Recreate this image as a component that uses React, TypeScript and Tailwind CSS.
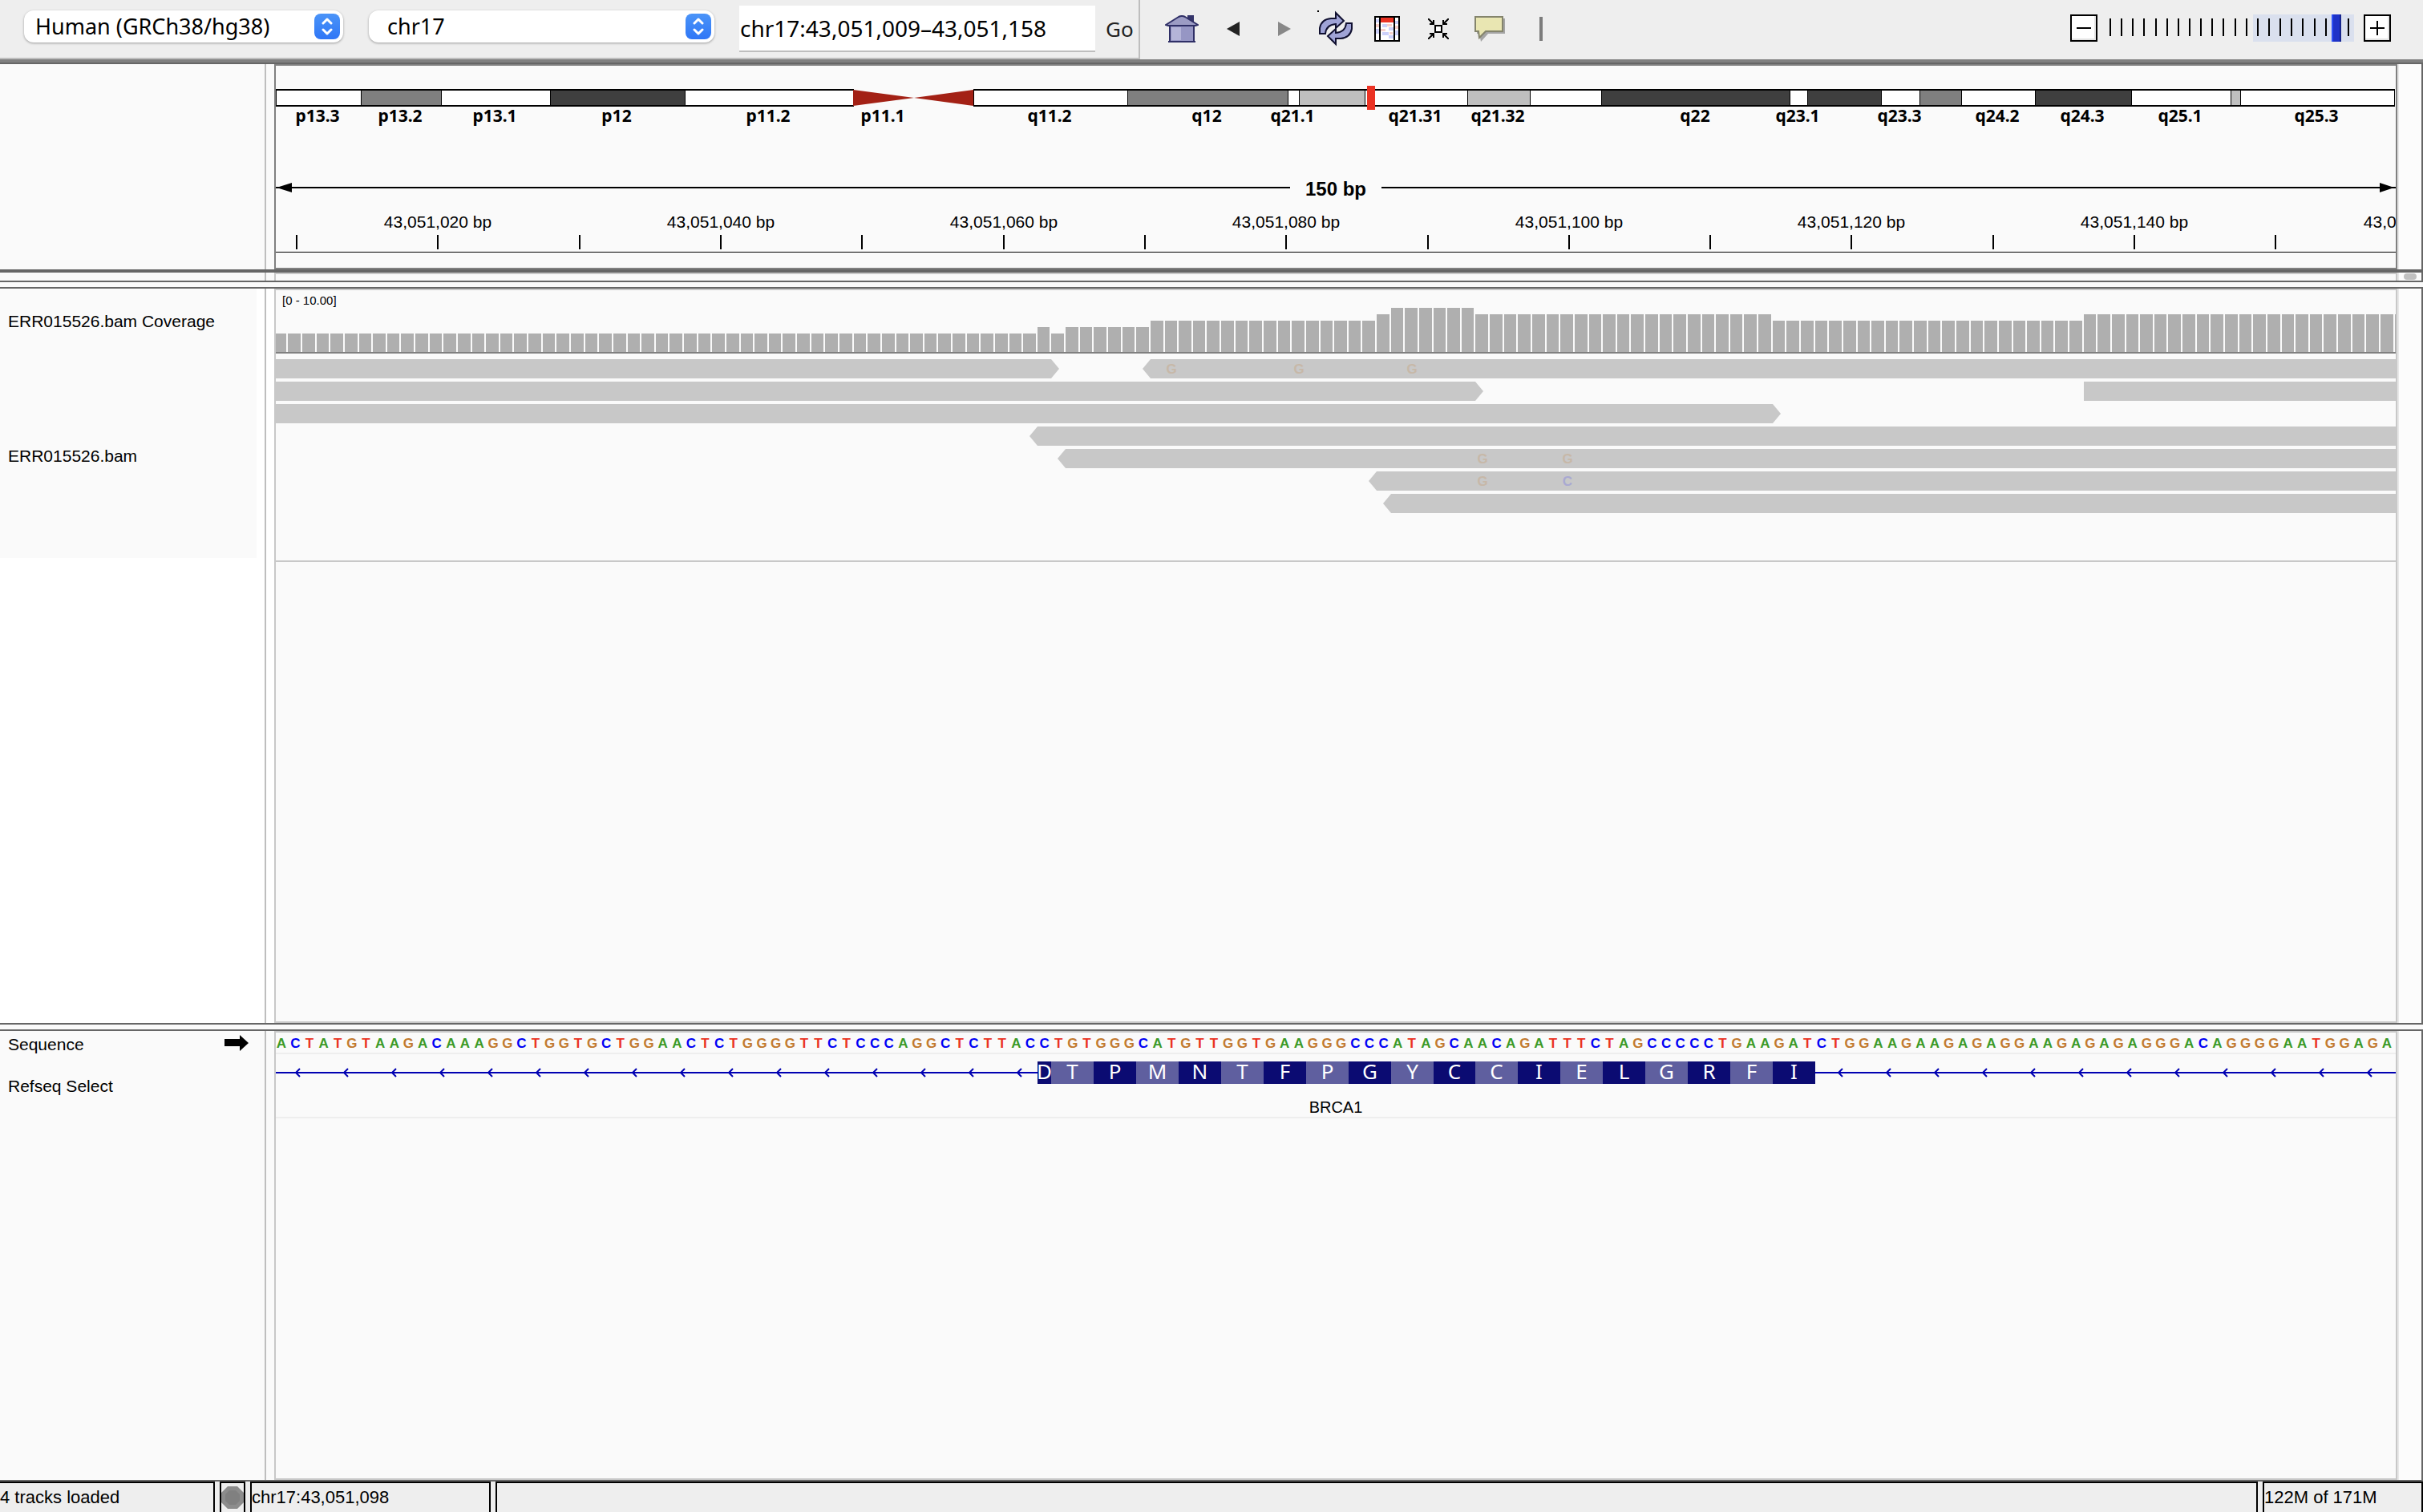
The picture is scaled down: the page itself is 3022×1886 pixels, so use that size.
import { useLayoutEffect, useRef, useState } from "react"
import type { ReactNode } from "react"

const SEQUENCE =
  "ACTATGTAAGACAAAGGCTGGTGCTGGAACTCTGGGGTTCTCCCAGGCTCTTACCTGTGG" +
  "GCATGTTGGTGAAGGGCCCATAGCAACAGATTTCTAGCCCCCTGAAGATC" +
  "TGGAAGAAGAGAGGAAGAGAGAGGGACAGGGGAATGGAGA"

const BASE_COLORS: Record<string, string> = {
  A: "text-[#3c9a27]",
  C: "text-[#0000f5]",
  G: "text-[#c27a30]",
  T: "text-[#ea3323]",
}

const VIEW_START = 43051009
const VIEW_BASES = 149.95
const VIEW_OFFSET = 0.13

// cytobands of chr17, ends in units of the ideogram (0 - 2643)
const BANDS: { name?: string; start: number; end: number; fill: string }[] = [
  { name: "p13.3", start: 0, end: 106, fill: "#ffffff" },
  { name: "p13.2", start: 106, end: 206, fill: "#7f7f7f" },
  { name: "p13.1", start: 206, end: 342, fill: "#ffffff" },
  { name: "p12", start: 342, end: 510, fill: "#3f3f3f" },
  { name: "p11.2", start: 510, end: 720, fill: "#ffffff" },
  { name: "p11.1", start: 720, end: 796, fill: "cen" },
  { start: 796, end: 870, fill: "cen" },
  { name: "q11.2", start: 870, end: 1062, fill: "#ffffff" },
  { name: "q12", start: 1062, end: 1262, fill: "#7f7f7f" },
  { name: "q21.1", start: 1262, end: 1276, fill: "#ffffff" },
  { start: 1276, end: 1358, fill: "#bfbfbf" },
  { name: "q21.31", start: 1358, end: 1486, fill: "#ffffff" },
  { name: "q21.32", start: 1486, end: 1564, fill: "#bfbfbf" },
  { start: 1564, end: 1653, fill: "#ffffff" },
  { name: "q22", start: 1653, end: 1888, fill: "#3f3f3f" },
  { name: "q23.1", start: 1888, end: 1910, fill: "#ffffff" },
  { start: 1910, end: 2002, fill: "#3f3f3f" },
  { name: "q23.3", start: 2002, end: 2050, fill: "#ffffff" },
  { start: 2050, end: 2102, fill: "#7f7f7f" },
  { name: "q24.2", start: 2102, end: 2194, fill: "#ffffff" },
  { name: "q24.3", start: 2194, end: 2314, fill: "#3f3f3f" },
  { name: "q25.1", start: 2314, end: 2438, fill: "#ffffff" },
  { start: 2438, end: 2450, fill: "#bfbfbf" },
  { name: "q25.3", start: 2450, end: 2642, fill: "#ffffff" },
]

// [first base, last base (exclusive), depth]
const COVERAGE = [
  [0, 54, 3],
  [54, 55, 4],
  [55, 56, 3],
  [56, 62, 4],
  [62, 78, 5],
  [78, 79, 6],
  [79, 85, 7],
  [85, 106, 6],
  [106, 128, 5],
  [128, 151, 6],
]

type Read = { start: number; end: number; tip?: "left" | "right" }

const READ_ROWS: { reads: Read[]; snps?: [number, string][] }[] = [
  {
    reads: [
      { start: 0, end: 55, tip: "right" },
      { start: 62, end: 151, tip: "left" },
    ],
    snps: [
      [63, "G"],
      [72, "G"],
      [80, "G"],
    ],
  },
  {
    reads: [
      { start: 0, end: 85, tip: "right" },
      { start: 128, end: 151 },
    ],
  },
  { reads: [{ start: 0, end: 106, tip: "right" }] },
  { reads: [{ start: 54, end: 151, tip: "left" }] },
  {
    reads: [{ start: 56, end: 151, tip: "left" }],
    snps: [
      [85, "G"],
      [91, "G"],
    ],
  },
  {
    reads: [{ start: 78, end: 151, tip: "left" }],
    snps: [
      [85, "G"],
      [91, "C"],
    ],
  },
  { reads: [{ start: 79, end: 151, tip: "left" }] },
]

const AMINO_ACIDS = "DTPMNTFPGYCCIELGRFI"

function Chart({
  height,
  label,
  children,
}: {
  height: number
  label: string
  children: (width: number, x: (base: number) => number) => ReactNode
}) {
  const ref = useRef<HTMLDivElement>(null)
  const [width, setWidth] = useState(0)

  useLayoutEffect(() => {
    const el = ref.current
    if (!el) return
    setWidth(el.clientWidth)
    const observer = new ResizeObserver(() => setWidth(el.clientWidth))
    observer.observe(el)
    return () => observer.disconnect()
  }, [])

  const x = (base: number) => Math.round(((base - VIEW_OFFSET) * width) / VIEW_BASES)

  return (
    <div ref={ref} className="w-full overflow-hidden">
      {width > 0 && (
        <svg width={width} height={height} role="img" aria-label={label} className="block">
          {children(width, x)}
        </svg>
      )}
    </div>
  )
}

function Ideogram() {
  return (
    <Chart height={110} label="Chromosome 17 ideogram">
      {(width) => {
        const s = (v: number) => Math.round((v * width) / 2644)
        return (
          <>
            {BANDS.map((b, i) => {
              const x1 = s(b.start)
              const x2 = s(b.end)
              if (b.fill === "cen") {
                const points = b.name
                  ? `${x1},30 ${x2},40 ${x1},50`
                  : `${x2},30 ${x1},40 ${x2},50`
                return <polygon key={i} points={points} fill="#a32115" />
              }
              return (
                <g key={i} shapeRendering="crispEdges">
                  <rect x={x1} y={29} width={x2 - x1 + 1} height={22} fill="#000" />
                  <rect x={x1 + 1} y={31} width={x2 - x1 - 1} height={18} fill={b.fill} />
                </g>
              )
            })}
            <rect x={s(1361)} y={25} width={10} height={30} fill="#eb3324" />
            {BANDS.filter((b) => b.name).map((b) => (
              <text
                key={b.name}
                x={s((b.start + b.end) / 2) - 1}
                y={70}
                textAnchor="middle"
                className="font-['Noto_Sans',sans-serif] text-[21px] font-bold"
              >
                {b.name}
              </text>
            ))}
          </>
        )
      }}
    </Chart>
  )
}

function Ruler() {
  const ticks = Array.from({ length: 16 }, (_, i) => 43051010 + i * 10)

  return (
    <Chart height={142} label="Ruler">
      {(width, x) => {
        const mid = Math.round(width / 2)
        return (
          <>
            <rect x={0} y={41} width={mid - 57} height={2} />
            <rect x={mid + 57} y={41} width={mid - 57} height={2} />
            <polygon points="1,42 20,36 20,48" />
            <polygon points={`${width - 2},42 ${width - 20},36 ${width - 20},48`} />
            <text x={mid} y={52} textAnchor="middle" className="text-[24px] font-bold">
              150 bp
            </text>
            {ticks.map((t) => {
              const tx = x(t - VIEW_START + 0.6)
              return (
                <g key={t}>
                  <rect x={tx - 1} y={101} width={2} height={18} />
                  {t % 20 === 0 && (
                    <text x={tx} y={92} textAnchor="middle" className="text-[21px]">
                      {t.toLocaleString("en-US")} bp
                    </text>
                  )}
                </g>
              )
            })}
            <rect x={0} y={122} width={width} height={1} />
          </>
        )
      }}
    </Chart>
  )
}

function Coverage() {
  return (
    <Chart height={59} label="Coverage">
      {(width, x) => (
        <>
          {COVERAGE.flatMap(([start, end, depth]) =>
            Array.from({ length: end - start }, (_, i) => {
              const base = start + i
              return (
                <rect
                  key={base}
                  x={x(base)}
                  y={58 - depth * 8}
                  width={x(base + 1) - x(base) - 2}
                  height={depth * 8}
                  fill="#afafaf"
                />
              )
            })
          )}
          <rect x={0} y={57} width={width} height={2} fill="#808080" />
        </>
      )}
    </Chart>
  )
}

function Alignments() {
  return (
    <Chart height={192} label="Aligned reads">
      {(width, x) => (
        <>
          {READ_ROWS.map((row, r) => {
            const y = r * 28
            return (
              <g key={r}>
                {row.reads.map((read) => {
                  const x1 = Math.max(0, x(read.start))
                  const x2 = Math.min(width, x(read.end))
                  const left = read.tip === "left" ? x1 - 10 : x1
                  const right = read.tip === "right" ? x2 + 10 : x2
                  return (
                    <polygon
                      key={read.start}
                      fill="#c8c8c8"
                      points={`${x1},${y} ${x2},${y} ${right},${y + 12} ${x2},${y + 24} ${x1},${y + 24} ${left},${y + 12}`}
                    />
                  )
                })}
                {row.snps?.map(([base, letter]) => (
                  <text
                    key={base}
                    x={x(base + 0.5)}
                    y={y + 18}
                    textAnchor="middle"
                    fill={letter === "C" ? "#a9a9d2" : "#c7b8a8"}
                    className="text-[17px] font-bold"
                  >
                    {letter}
                  </text>
                ))}
              </g>
            )
          })}
        </>
      )}
    </Chart>
  )
}

function Gene() {
  return (
    <Chart height={78} label="BRCA1 gene">
      {(width, x) => {
        const exonStart = x(54)
        const exonEnd = x(109)
        const chevrons: number[] = []
        for (let c = 25; c < exonStart - 10; c += 60) chevrons.push(c)
        for (let c = exonEnd + 29; c < width; c += 60) chevrons.push(c)

        return (
          <>
            <rect x={0} y={22} width={width} height={2} fill="#0000b2" />
            {chevrons.map((c) => (
              <path key={c} d={`M${c + 5} 18L${c} 23L${c + 5} 28`} fill="none" stroke="#0000b2" strokeWidth={2} />
            ))}
            {AMINO_ACIDS.split("").map((aa, i) => {
              // first codon is split over the exon boundary, one base is left here
              const x1 = i === 0 ? exonStart : x(52 + i * 3)
              const x2 = x(55 + i * 3)
              return (
                <g key={i}>
                  <rect x={x1} y={9} width={x2 - x1} height={28} fill={i % 2 ? "#5f5f9f" : "#0b0b72"} />
                  <text
                    x={(x1 + x2) / 2}
                    y={31}
                    textAnchor="middle"
                    fill="#fff"
                    className="font-['Noto_Sans',sans-serif] text-[26px]"
                  >
                    {aa}
                  </text>
                </g>
              )
            })}
            <text x={width / 2} y={73} textAnchor="middle" className="text-[20px]">
              BRCA1
            </text>
          </>
        )
      }}
    </Chart>
  )
}

function SequenceTrack() {
  return (
    <div className="h-[25px] pt-[3px]">
      <div className="-ml-[2px] mr-[2px] flex text-[17px] leading-[22px] font-bold">
        {SEQUENCE.split("").map((base, i) => (
          <span key={i} className={`w-0 flex-1 text-center ${BASE_COLORS[base]}`}>
            {base}
          </span>
        ))}
      </div>
    </div>
  )
}

function Panel({
  names,
  children,
  className = "",
  dataClass = "border-[#c8c8c8]",
  gutterClass = "bg-[#fafafa]",
  thumb = false,
}: {
  names?: ReactNode
  children?: ReactNode
  className?: string
  dataClass?: string
  gutterClass?: string
  thumb?: boolean
}) {
  return (
    <section className={`flex border-r-2 border-[#666666] ${className}`}>
      <div className={`w-[330px] shrink-0 ${gutterClass}`}>{names}</div>
      <div className={`w-3 shrink-0 border-l-2 border-[#bebebe] ${gutterClass}`} />
      <div className={`min-w-0 flex-1 border-2 ${dataClass}`}>{children}</div>
      <div className="w-[30px] shrink-0 border-l-2 border-[#e8e8e8] bg-[#fcfcfc]">
        {thumb && <div className="mx-auto mt-px h-2 w-4 rounded-full bg-[#c1c1c1]" />}
      </div>
    </section>
  )
}

function Splitter() {
  return <div className="h-[10px] shrink-0 border-y-2 border-[#666666] bg-[#fafafa]" />
}

function Dropdown({
  label,
  value,
  className,
  selectClass,
}: {
  label: string
  value: string
  className: string
  selectClass: string
}) {
  return (
    <div className={`relative mt-[13px] h-10 rounded-xl bg-white shadow-[0_1px_3px_rgba(0,0,0,0.35)] ${className}`}>
      <select
        aria-label={label}
        defaultValue={value}
        className={`h-full w-full appearance-none bg-transparent text-[27px] outline-none ${selectClass}`}
      >
        <option>{value}</option>
      </select>
      <span className="pointer-events-none absolute top-1 right-1 flex size-8 items-center justify-center rounded-lg bg-linear-to-b from-[#4b94f8] to-[#2f76f6]">
        <svg width="16" height="22" viewBox="0 0 16 22" fill="none" stroke="#fff" strokeWidth="3" strokeLinecap="round" strokeLinejoin="round">
          <path d="M3 7L8 2L13 7M3 15L8 20L13 15" />
        </svg>
      </span>
    </div>
  )
}

function HomeIcon() {
  return (
    <svg width="42" height="34" viewBox="0 0 42 34">
      <path d="M28 0h8v9h-8z" fill="#34346a" />
      <path d="M6 13h30v20H6z" fill="#9696c4" stroke="#2f2f66" strokeWidth="2" />
      <path d="M8 15h12v16H8z" fill="#b4b4d8" />
      <path d="M1 12L17 2Q21 0 25 2L41 12L38 13H4Z" fill="#9c9cc4" stroke="#2f2f66" strokeWidth="2" />
      <path d="M4 32h34v2H4z" fill="#2f2f66" />
    </svg>
  )
}

function RefreshIcon() {
  const arrow = "M1 27V20Q3 9 15 8H21V1L31 11L21 20V15Q9 16 8 27Z"
  return (
    <svg width="42" height="42" viewBox="0 0 42 42" fill="#9fa3d6" stroke="#101030" strokeWidth="2" className="overflow-visible">
      <path d={arrow} />
      <path d={arrow} transform="rotate(180 21 20.5)" />
      <path d="M-2 -2h2v2h-2z" fill="#000" stroke="none" />
    </svg>
  )
}

function RegionIcon() {
  return (
    <svg width="32" height="32" viewBox="0 0 32 32" shapeRendering="crispEdges">
      <path d="M1 1h30v30H1z" fill="#fff" stroke="#000" strokeWidth="2" />
      <path d="M2 4h4v4H2zM2 16h4v6H2zM10 10h6v4h-6zM18 14h6v4h-6zM10 20h8v4h-8zM18 24h6v4h-6zM26 6h4v4h-4zM26 18h4v6h-4z" fill="#ccd0fa" />
      <path d="M2 10h4v4H2zM16 10h6v3h-6zM8 16h6v3H8zM26 12h4v4h-4zM19 20h4v3h-4z" fill="#f6d0cc" />
      <path d="M8 2h16v6H8z" fill="#eb3324" />
      <path d="M6 2h2v28H6zM24 2h2v28h-2z" />
    </svg>
  )
}

function FitIcon() {
  return (
    <svg width="26" height="26" viewBox="0 0 26 26" fill="none" stroke="#000" strokeWidth="2">
      <path d="M9 9h8v8H9z" fill="#fff" />
      <path d="M0 0L7 7M26 0L19 7M0 26L7 19M26 26L19 19" />
      <path d="M7 2V7H2M19 2V7H24M7 24V19H2M19 24V19H24" />
    </svg>
  )
}

function TooltipIcon() {
  return (
    <svg width="38" height="32" viewBox="0 0 38 32">
      <path d="M3 3H38V22H17L8 32L6 22H3Z" fill="#a4a4a4" />
      <path d="M1 1H35V19H14L6 27L5 19H1Z" fill="#e9e6b2" stroke="#84846c" strokeWidth="2" />
    </svg>
  )
}

function Toolbar() {
  const [zoom, setZoom] = useState(20)
  const [locus, setLocus] = useState("chr17:43,051,009–43,051,158")
  const iconButton = "flex w-16 items-center justify-center"

  return (
    <header className="flex h-[74px] shrink-0 bg-[#eeeeee] font-['Noto_Sans',sans-serif]">
      <div className="flex shrink-0 items-start border-r-2 border-b-2 border-[#bebebe] pl-[30px]">
        <Dropdown label="Genome" value="Human (GRCh38/hg38)" className="w-[398px]" selectClass="pl-[14px]" />
        <Dropdown label="Chromosome" value="chr17" className="ml-8 w-[431px]" selectClass="pl-[23px]" />
        <input
          aria-label="Locus"
          value={locus}
          onChange={(e) => setLocus(e.target.value)}
          className="mt-[7px] ml-[31px] h-[58px] w-[444px] border-b-2 border-[#bebebe] bg-white pl-px text-[28px] outline-none"
        />
        <button className="mt-1 ml-[13px] h-16 w-[41px] text-left text-[26px] text-[#222222]">Go</button>
      </div>

      <div className="ml-5 flex h-[72px] shrink-0">
        <button aria-label="Home" className={iconButton}><HomeIcon /></button>
        <button aria-label="Back" className={iconButton}>
          <svg width="16" height="18"><path d="M0 9L16 0V18Z" fill="#222" /></svg>
        </button>
        <button aria-label="Forward" className={iconButton}>
          <svg width="16" height="18"><path d="M16 9L0 0V18Z" fill="#888" /></svg>
        </button>
        <button aria-label="Refresh" className={iconButton}><RefreshIcon /></button>
        <button aria-label="Region of interest" className={iconButton}><RegionIcon /></button>
        <button aria-label="Fit to window" className={iconButton}><FitIcon /></button>
        <button aria-label="Popup behavior" className={iconButton}><TooltipIcon /></button>
        <div className={iconButton}><div className="h-[30px] w-1 bg-[#7c7c7c]" /></div>
      </div>

      <div className="mr-10 ml-auto flex h-[70px] items-center">
        <button
          aria-label="Zoom out"
          onClick={() => setZoom(Math.max(0, zoom - 1))}
          className="flex size-[34px] items-center justify-center border-2 border-black bg-white shadow-[inset_-2px_-2px_0_#e4e4e4]"
        >
          <svg width="18" height="18"><path d="M0 8h18v2H0z" /></svg>
        </button>
        <div className="relative ml-[9px] h-[34px] w-[311px]">
          <div className="ml-auto h-full w-[126px] bg-[#dae0ee]" />
          <div className="absolute inset-x-[6px] top-[5px] flex h-[22px] justify-between">
            {Array.from({ length: 22 }, (_, i) => (
              <span key={i} className="w-[2px] bg-black" />
            ))}
          </div>
          <input
            type="range"
            aria-label="Zoom"
            min={0}
            max={21}
            value={zoom}
            onChange={(e) => setZoom(Number(e.target.value))}
            className="absolute inset-y-0 left-px m-0 h-full w-[308px] appearance-none bg-transparent [&::-webkit-slider-thumb]:h-[34px] [&::-webkit-slider-thumb]:w-3 [&::-webkit-slider-thumb]:appearance-none [&::-webkit-slider-thumb]:border-x-2 [&::-webkit-slider-thumb]:border-l-[#2c50f6] [&::-webkit-slider-thumb]:border-r-[#17258e] [&::-webkit-slider-thumb]:bg-[#1e33c8]"
          />
        </div>
        <button
          aria-label="Zoom in"
          onClick={() => setZoom(Math.min(21, zoom + 1))}
          className="ml-3 flex size-[34px] items-center justify-center border-2 border-black bg-white shadow-[inset_-2px_-2px_0_#e4e4e4]"
        >
          <svg width="18" height="18"><path d="M0 8h18v2H0zM8 0h2v18H8z" /></svg>
        </button>
      </div>
    </header>
  )
}

function StatusBar() {
  const cell = "border-x-2 border-t-2 border-black pt-1"

  return (
    <footer className="flex h-[38px] shrink-0 gap-[6px] bg-[#eeeeee] text-[22px] leading-7">
      <div className={`${cell} w-[268px] border-l-0`}>4 tracks loaded</div>
      <div className={`${cell} w-8`}>
        <svg width="28" height="28" viewBox="0 0 28 28" className="block">
          <path d="M8 0h12l8 8v12l-8 8H8l-8-8V8z" fill="#8c8c8c" />
          <path d="M10 5h8l5 5v8l-5 5h-8l-5-5v-8z" fill="#808080" />
        </svg>
      </div>
      <div className={`${cell} w-[300px]`}>chr17:43,051,098</div>
      <div className={`${cell} flex-1`} />
      <div className={`${cell} w-[200px]`}>122M of 171M</div>
    </footer>
  )
}

export default function App() {
  return (
    <div className="flex h-screen min-h-[1200px] flex-col bg-[#fafafa] font-['Liberation_Sans',sans-serif] text-black">
      <Toolbar />
      <div className="h-1 shrink-0 bg-[#808080]" />
      <div className="h-[2px] shrink-0 bg-[#666666]" />

      <Panel className="h-64 shrink-0" dataClass="border-[#808080]">
        <Ideogram />
        <Ruler />
      </Panel>
      <div className="h-1 shrink-0 bg-[#666666]" />
      <Panel className="h-[10px] shrink-0" dataClass="border-b-0 border-[#c8c8c8]" thumb />
      <Splitter />

      <Panel
        className="min-h-[344px] flex-[916]"
        gutterClass="bg-white"
        names={
          <div className="h-[336px] w-[320px] bg-[#fafafa] pl-[10px] text-[21px] leading-7">
            <div className="pt-[27px]">ERR015526.bam Coverage</div>
            <div className="pt-[140px]">ERR015526.bam</div>
          </div>
        }
      >
        <div className="h-5 pt-[3px] pl-2 text-[15px] leading-5">[0 - 10.00]</div>
        <Coverage />
        <div className="mt-[7px] border-b-2 border-[#c8c8c8] pb-[59px]">
          <Alignments />
        </div>
      </Panel>
      <Splitter />

      <Panel
        className="min-h-[200px] flex-[560]"
        names={
          <div className="pl-[10px] text-[21px] leading-7">
            <div className="flex items-start justify-between pt-[3px] pr-[20px]">
              Sequence
              <svg width="30" height="20" className="mt-[2px]">
                <path d="M0 5H19V0L30 10L19 20V14H0Z" />
              </svg>
            </div>
            <div className="pt-6">Refseq Select</div>
          </div>
        }
      >
        <div className="border-b-2 border-[#eeeeee]">
          <SequenceTrack />
        </div>
        <div className="border-b-2 border-[#eeeeee]">
          <Gene />
        </div>
      </Panel>
      <div className="h-[2px] shrink-0 bg-[#666666]" />
      <StatusBar />
    </div>
  )
}
